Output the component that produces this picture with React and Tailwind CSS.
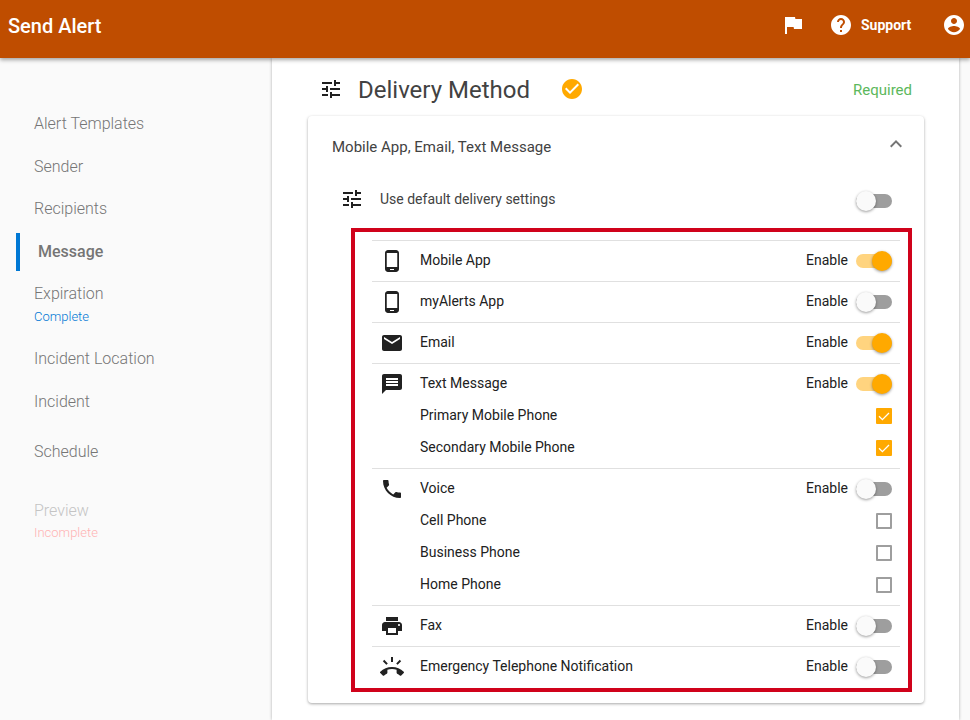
import React from 'react';

const paths = {
  tune: 'M3 17v2h6v-2H3zM3 5v2h10V5H3zm10 16v-2h8v-2h-8v-2h-2v6h2zM7 9v2H3v2h4v2h2V9H7zm14 4v-2H11v2h10zm-6-4h2V7h4V5h-4V3h-2v6z',
  phone: 'M16 1H8C6.34 1 5 2.34 5 4v16c0 1.66 1.34 3 3 3h8c1.66 0 3-1.34 3-3V4c0-1.66-1.34-3-3-3zm-2 20h-4v-1h4v1zm3.25-3H6.75V4h10.5v14z',
  email: 'M20 4H4c-1.1 0-1.99.9-1.99 2L2 18c0 1.1.9 2 2 2h16c1.1 0 2-.9 2-2V6c0-1.1-.9-2-2-2zm0 4l-8 5-8-5V6l8 5 8-5v2z',
  message: 'M20 2H4c-1.1 0-1.99.9-1.99 2L2 22l4-4h14c1.1 0 2-.9 2-2V4c0-1.1-.9-2-2-2zm-2 12H6v-2h12v2zm0-3H6V9h12v2zm0-3H6V6h12v2z',
  voice: 'M6.62 10.79c1.44 2.83 3.76 5.14 6.59 6.59l2.2-2.2c.27-.27.67-.36 1.02-.24 1.12.37 2.33.57 3.57.57.55 0 1 .45 1 1V20c0 .55-.45 1-1 1-9.39 0-17-7.61-17-17 0-.55.45-1 1-1h3.5c.55 0 1 .45 1 1 0 1.25.2 2.45.57 3.57.11.35.03.74-.25 1.02l-2.2 2.2z',
  print: 'M19 8H5c-1.66 0-3 1.34-3 3v6h4v4h12v-4h4v-6c0-1.66-1.34-3-3-3zm-3 11H8v-5h8v5zm3-7c-.55 0-1-.45-1-1s.45-1 1-1 1 .45 1 1-.45 1-1 1zm-1-9H6v4h12V3z',
  ring: 'M23.71 16.67C20.66 13.78 16.54 12 12 12 7.46 12 3.34 13.78.29 16.67c-.18.18-.29.43-.29.71 0 .28.11.53.29.71l2.48 2.48c.18.18.43.29.71.29.27 0 .52-.11.7-.28.79-.74 1.69-1.36 2.66-1.85.33-.16.56-.5.56-.9v-3.1c1.45-.48 3-.73 4.6-.73s3.15.25 4.6.72v3.1c0 .39.23.74.56.9.98.49 1.87 1.12 2.67 1.85.18.18.43.28.7.28.28 0 .53-.11.71-.29l2.48-2.48c.18-.18.29-.43.29-.71 0-.27-.11-.52-.29-.7zM21.16 6.26l-1.41-1.41-3.56 3.55 1.41 1.41s3.45-3.52 3.56-3.55zM13 2h-2v5h2V2zM6.4 9.81L7.81 8.4 4.26 4.84 2.84 6.26c.11.03 3.56 3.55 3.56 3.55z',
  flag: 'M15.4 6L15 4H5v17h2v-7h6.6l.4 2h8V6z',
  help: 'M12 2C6.48 2 2 6.48 2 12s4.48 10 10 10 10-4.48 10-10S17.52 2 12 2zm1 17h-2v-2h2v2zm2.07-7.75l-.9.92C13.45 12.9 13 13.5 13 15h-2v-.5c0-1.1.45-2.1 1.17-2.83l1.24-1.26c.37-.36.59-.86.59-1.41 0-1.1-.9-2-2-2s-2 .9-2 2H8c0-2.21 1.79-4 4-4s4 1.79 4 4c0 .88-.36 1.68-.93 2.25z',
  account: 'M12 2C6.48 2 2 6.48 2 12s4.48 10 10 10 10-4.48 10-10S17.52 2 12 2zm0 3c1.66 0 3 1.34 3 3s-1.34 3-3 3-3-1.34-3-3 1.34-3 3-3zm0 14.2c-2.5 0-4.71-1.28-6-3.22.03-1.99 4-3.08 6-3.08 1.99 0 5.97 1.09 6 3.08-1.29 1.94-3.5 3.22-6 3.22z',
  checkCircle: 'M12 2C6.48 2 2 6.48 2 12s4.48 10 10 10 10-4.48 10-10S17.52 2 12 2zm-2 15l-5-5 1.41-1.41L10 14.17l7.59-7.59L19 8l-9 9z',
  chevron: 'M12 8l-6 6 1.41 1.41L12 10.83l4.59 4.58L18 14z',
};

function Icon({ name, className = 'text-[#212121]' }) {
  return (
    <svg viewBox="0 0 24 24" fill="currentColor" className={`w-6 h-6 shrink-0 ${className}`}>
      <path d={paths[name]} />
    </svg>
  );
}

function Switch({ on }) {
  return (
    <div className="relative w-9 h-[14px] shrink-0">
      <div className={`w-full h-full rounded-full ${on ? 'bg-[#ffd47f]' : 'bg-[#9e9e9e]'}`} />
      <div
        className={`absolute top-[-3px] w-5 h-5 rounded-full shadow-[0_1px_3px_rgba(0,0,0,0.4)] ${on ? 'right-0 bg-[#ffa900]' : 'left-0 bg-[#fafafa]'}`}
      />
    </div>
  );
}

function Checkbox({ on }) {
  if (!on) return <div className="w-4 h-4 border-2 border-[#9e9e9e] rounded-[1px] shrink-0" />;
  return (
    <div className="w-4 h-4 bg-[#ffa900] rounded-[1px] shrink-0 flex items-center justify-center">
      <svg viewBox="0 0 16 16" className="w-4 h-4" fill="none" stroke="white" strokeWidth="1.3">
        <path d="M3 8.2l3.4 3.4L13 5" />
      </svg>
    </div>
  );
}

const nav = [
  { label: 'Alert Templates', cls: 'mt-[47px]' },
  { label: 'Sender', cls: 'mt-[5px]' },
  { label: 'Recipients', cls: 'mt-[4px]' },
  { label: 'Message', cls: 'mt-[5px]', active: true },
  { label: 'Expiration', cls: 'mt-[4px]', sub: 'Complete', subCls: '-mt-[4px] text-[#0078d4]' },
  { label: 'Incident Location', cls: 'mt-[15px]' },
  { label: 'Incident', cls: 'mt-[5px]' },
  { label: 'Schedule', cls: 'mt-[12px]' },
  { label: 'Preview', cls: 'mt-[21px]', sub: 'Incomplete', subCls: '-mt-[5px] text-[#ffb3b3]', disabled: true },
];

const methods = [
  { icon: 'phone', label: 'Mobile App', on: true },
  { icon: 'phone', label: 'myAlerts App' },
  { icon: 'email', label: 'Email', on: true },
  {
    icon: 'message',
    label: 'Text Message',
    on: true,
    subs: [
      { label: 'Primary Mobile Phone', on: true },
      { label: 'Secondary Mobile Phone', on: true },
    ],
  },
  {
    icon: 'voice',
    label: 'Voice',
    subs: [{ label: 'Cell Phone' }, { label: 'Business Phone' }, { label: 'Home Phone' }],
  },
  { icon: 'print', label: 'Fax' },
  { icon: 'ring', label: 'Emergency Telephone Notification' },
];

function Method({ m }) {
  return (
    <div className="border-t border-[#e0e0e0]">
      <div className="h-10 flex items-center px-2">
        <Icon name={m.icon} />
        <span className="ml-4 pb-[2px]">{m.label}</span>
        <span className="ml-auto mr-2 pb-[2px]">Enable</span>
        <Switch on={m.on} />
      </div>
      {m.subs && (
        <div className="-mt-1 pb-1">
          {m.subs.map((s) => (
            <div key={s.label} className="h-8 flex items-center justify-between pl-12 pr-2">
              <span className="pb-[2px]">{s.label}</span>
              <Checkbox on={s.on} />
            </div>
          ))}
        </div>
      )}
    </div>
  );
}

export default function App() {
  return (
    <div className="h-[720px] overflow-hidden flex flex-col bg-[#fafafa] text-sm text-[#212121] font-['Roboto',sans-serif]">
      <header className="relative z-10 h-[58px] shrink-0 bg-[#bf4d00] text-white flex items-start pt-[14px] shadow-[0_2px_4px_rgba(0,0,0,0.35)]">
        <h1 className="ml-2 text-xl leading-6 font-medium">Send Alert</h1>
        <div className="ml-auto mr-1 -mt-px flex items-center">
          <Icon name="flag" className="text-white" />
          <Icon name="help" className="text-white ml-[25px]" />
          <span className="ml-2 font-bold text-sm w-[50px] whitespace-nowrap">Support</span>
          <Icon name="account" className="text-white ml-[31px]" />
        </div>
      </header>

      <div className="flex-1 flex min-h-0">
        <aside className="w-[272px] shrink-0 flex flex-col">
          {nav.map((n) => (
            <div key={n.label} className={n.cls}>
              {n.active ? (
                <div className="ml-4 h-[38px] pl-[18px] border-l-4 border-[#0078d4] flex items-center font-medium text-base text-[#757575]">
                  {n.label}
                </div>
              ) : (
                <div className={`pl-[34px] h-[38px] flex items-center font-light text-base ${n.disabled ? 'text-[#c4c4c4]' : 'text-[#757575]'}`}>
                  {n.label}
                </div>
              )}
              {n.sub && (
                <div className={`pl-[34px] text-[13px] leading-4 font-light ${n.subCls}`}>
                  {n.sub}
                </div>
              )}
            </div>
          ))}
        </aside>

        <main className="w-[687px] shrink-0 bg-white shadow-[0_0_3px_rgba(0,0,0,0.3)] pl-9 pr-[35px]">
          <div className="h-10 mt-[11px] mb-[7px] flex items-center pl-[11px] pr-3">
            <Icon name="tune" className="text-[#212121] -mt-px" />
            <h2 className="ml-[15px] text-2xl text-[#424242] pt-[2px]">Delivery Method</h2>
            <Icon name="checkCircle" className="text-[#ffa900] ml-[30px] -mt-px" />
            <span className="ml-auto text-[#5cb85c] text-[15px] pt-1">Required</span>
          </div>

          <section className="rounded bg-white shadow-[0_1px_3px_rgba(0,0,0,0.35)] pb-[11px]">
            <div className="h-[60px] pl-6 pr-4 flex items-center justify-between">
              <span className="text-[15px] text-[#424242] pt-[3px]">Mobile App, Email, Text Message</span>
              <Icon name="chevron" className="text-[#757575] -mt-1" />
            </div>
            <div className="h-[46px] mb-[6px] flex items-center px-8">
              <Icon name="tune" />
              <span className="ml-4 text-[#424242]">Use default delivery settings</span>
              <div className="ml-auto mt-1">
                <Switch />
              </div>
            </div>
            <div className="ml-[43px] mr-3 border-4 border-[#d0021b] pt-2 pb-px pl-[17px] pr-2">
              {methods.map((m) => (
                <Method key={m.label} m={m} />
              ))}
            </div>
          </section>
        </main>
      </div>
    </div>
  );
}
